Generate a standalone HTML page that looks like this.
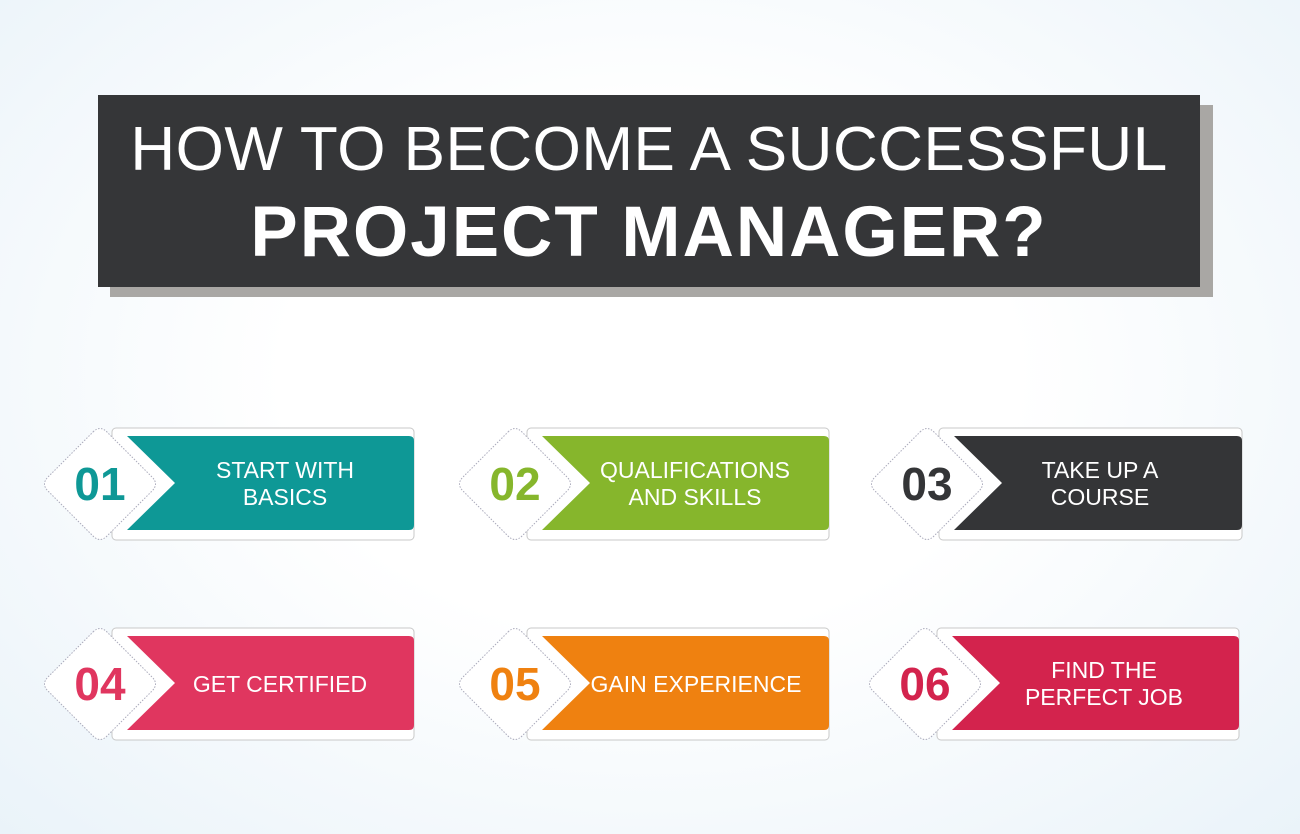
<!DOCTYPE html>
<html><head><meta charset="utf-8"><style>
body{margin:0;width:1300px;height:834px;overflow:hidden;background:radial-gradient(ellipse at 50% 45%,#ffffff 40%,#eaf3f9 100%);font-family:"Liberation Sans",sans-serif;position:relative}
.sh{position:absolute;left:110px;top:105px;width:1103px;height:192px;background:#a9a7a4}
.tb{position:absolute;left:98px;top:95px;width:1102px;height:192px;background:#353638;color:#fff;text-align:center}
.tb div{line-height:1;position:absolute;left:0;width:100%;white-space:nowrap}
.t1{top:24px;font-size:62px;letter-spacing:0.5px}
.t2{top:102px;font-size:71px;font-weight:bold;letter-spacing:2px}
svg.c{position:absolute;width:380px;height:120px;overflow:visible}
svg text{font-family:"Liberation Sans",sans-serif}
</style></head><body>
<div class="sh"></div>
<div class="tb"><div class="t1">HOW TO BECOME A SUCCESSFUL</div><div class="t2">PROJECT MANAGER?</div></div>

<svg class="c" style="left:43px;top:425px" viewBox="0 0 380 120">
<rect x="69" y="3" width="302" height="112" rx="4" fill="#fff" stroke="#c8c8c8"/>
<path d="M84 11 H366 Q371 11 371 16 V100 Q371 105 366 105 H84 L132 58 Z" fill="#0e9896"/>
<path d="M50 7 Q57 0 64 7 L109 52 Q116 59 109 66 L64 111 Q57 118 50 111 L5 66 Q-2 59 5 52 Z" fill="#fff" stroke="#aab" stroke-dasharray="1.5 1.5"/>
<text x="57" y="75" text-anchor="middle" font-size="46" font-weight="bold" fill="#0e9896">01</text>
<text x="242" y="53" text-anchor="middle" font-size="23" fill="#fff">START WITH</text>
<text x="242" y="80" text-anchor="middle" font-size="23" fill="#fff">BASICS</text>
</svg>

<svg class="c" style="left:458px;top:425px" viewBox="0 0 380 120">
<rect x="69" y="3" width="302" height="112" rx="4" fill="#fff" stroke="#c8c8c8"/>
<path d="M84 11 H366 Q371 11 371 16 V100 Q371 105 366 105 H84 L132 58 Z" fill="#86b62c"/>
<path d="M50 7 Q57 0 64 7 L109 52 Q116 59 109 66 L64 111 Q57 118 50 111 L5 66 Q-2 59 5 52 Z" fill="#fff" stroke="#aab" stroke-dasharray="1.5 1.5"/>
<text x="57" y="75" text-anchor="middle" font-size="46" font-weight="bold" fill="#86b62c">02</text>
<text x="237" y="53" text-anchor="middle" font-size="23" fill="#fff">QUALIFICATIONS</text>
<text x="237" y="80" text-anchor="middle" font-size="23" fill="#fff">AND SKILLS</text>
</svg>

<svg class="c" style="left:870px;top:425px" viewBox="0 0 380 120">
<rect x="69" y="3" width="303" height="112" rx="4" fill="#fff" stroke="#c8c8c8"/>
<path d="M84 11 H367 Q372 11 372 16 V100 Q372 105 367 105 H84 L132 58 Z" fill="#343537"/>
<path d="M50 7 Q57 0 64 7 L109 52 Q116 59 109 66 L64 111 Q57 118 50 111 L5 66 Q-2 59 5 52 Z" fill="#fff" stroke="#aab" stroke-dasharray="1.5 1.5"/>
<text x="57" y="75" text-anchor="middle" font-size="46" font-weight="bold" fill="#343537">03</text>
<text x="230" y="53" text-anchor="middle" font-size="23" fill="#fff">TAKE UP A</text>
<text x="230" y="80" text-anchor="middle" font-size="23" fill="#fff">COURSE</text>
</svg>

<svg class="c" style="left:43px;top:625px" viewBox="0 0 380 120">
<rect x="69" y="3" width="302" height="112" rx="4" fill="#fff" stroke="#c8c8c8"/>
<path d="M84 11 H366 Q371 11 371 16 V100 Q371 105 366 105 H84 L132 58 Z" fill="#e0365f"/>
<path d="M50 7 Q57 0 64 7 L109 52 Q116 59 109 66 L64 111 Q57 118 50 111 L5 66 Q-2 59 5 52 Z" fill="#fff" stroke="#aab" stroke-dasharray="1.5 1.5"/>
<text x="57" y="75" text-anchor="middle" font-size="46" font-weight="bold" fill="#e0365f">04</text>
<text x="237" y="67" text-anchor="middle" font-size="23" fill="#fff">GET CERTIFIED</text>
</svg>

<svg class="c" style="left:458px;top:625px" viewBox="0 0 380 120">
<rect x="69" y="3" width="302" height="112" rx="4" fill="#fff" stroke="#c8c8c8"/>
<path d="M84 11 H366 Q371 11 371 16 V100 Q371 105 366 105 H84 L132 58 Z" fill="#ef8110"/>
<path d="M50 7 Q57 0 64 7 L109 52 Q116 59 109 66 L64 111 Q57 118 50 111 L5 66 Q-2 59 5 52 Z" fill="#fff" stroke="#aab" stroke-dasharray="1.5 1.5"/>
<text x="57" y="75" text-anchor="middle" font-size="46" font-weight="bold" fill="#ef8110">05</text>
<text x="238" y="67" text-anchor="middle" font-size="23" fill="#fff">GAIN EXPERIENCE</text>
</svg>

<svg class="c" style="left:868px;top:625px" viewBox="0 0 380 120">
<rect x="69" y="3" width="302" height="112" rx="4" fill="#fff" stroke="#c8c8c8"/>
<path d="M84 11 H366 Q371 11 371 16 V100 Q371 105 366 105 H84 L132 58 Z" fill="#d3234d"/>
<path d="M50 7 Q57 0 64 7 L109 52 Q116 59 109 66 L64 111 Q57 118 50 111 L5 66 Q-2 59 5 52 Z" fill="#fff" stroke="#aab" stroke-dasharray="1.5 1.5"/>
<text x="57" y="75" text-anchor="middle" font-size="46" font-weight="bold" fill="#d3234d">06</text>
<text x="236" y="53" text-anchor="middle" font-size="23" fill="#fff">FIND THE</text>
<text x="236" y="80" text-anchor="middle" font-size="23" fill="#fff">PERFECT JOB</text>
</svg>
</body></html>
